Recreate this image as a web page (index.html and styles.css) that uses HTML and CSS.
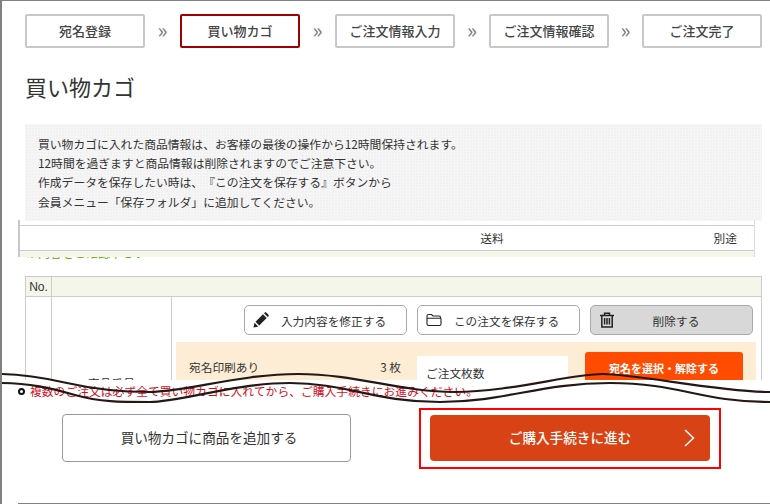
FILE: index.html
```html
<!DOCTYPE html>
<html lang="ja">
<head>
    <meta charset="UTF-8">
    <title>買い物カゴ</title>
    <link rel="stylesheet" href="styles.css">
</head>
<body>
<div class="page">
    <div class="upper">
        <div class="steps">
            <div class="step">宛名登録</div>
            <div class="sep">»</div>
            <div class="step current">買い物カゴ</div>
            <div class="sep">»</div>
            <div class="step">ご注文情報入力</div>
            <div class="sep">»</div>
            <div class="step">ご注文情報確認</div>
            <div class="sep">»</div>
            <div class="step">ご注文完了</div>
        </div>

        <h1 class="title">買い物カゴ</h1>

        <div class="notice">
            買い物カゴに入れた商品情報は、お客様の最後の操作から12時間保持されます。<br>
            12時間を過ぎますと商品情報は削除されますのでご注意下さい。<br>
            作成データを保存したい時は、『この注文を保存する』ボタンから<br>
            会員メニュー「保存フォルダ」に追加してください。
        </div>

        <div class="shipping">
            <div class="shipping-row">
                <span>送料</span>
                <span>別途</span>
            </div>
            <div class="shipping-foot"></div>
        </div>
        <div class="green-cut"><span>※内容をご確認下さい</span></div>

        <div class="cart">
            <div class="cart-no">No.</div>
            <div class="cart-head"></div>
            <div class="cart-num"></div>
            <div class="cart-name">商品番号</div>
            <div class="cart-main">
                <div class="actions">
                    <a class="btn">
                        <svg class="ico" viewBox="0 0 16 16"><path d="M.5 15.500l1-4.700 3.700 3.700zM2.500 9.800L10 2.300l3.700 3.700-7.500 7.500zM11 1.300l.8-.8c.4-.4 1-.4 1.400 0l2.300 2.300c.4.4.4 1 0 1.400l-.8.8z" fill="#222"/></svg>
                        <span>入力内容を修正する</span>
                    </a>
                    <a class="btn">
                        <svg class="ico" viewBox="0 0 16 16"><path d="M1 12V4c0-1 .6-1.500 1.500-1.500h3l1.500 1.500h6c1 0 1.500.5 1.500 1.500v.7H1M1 12c0 1 .6 1.500 1.500 1.500h11c1 0 1.500-.5 1.500-1.500V6.200" fill="none" stroke="#222" stroke-width="1.100"/></svg>
                        <span>この注文を保存する</span>
                    </a>
                    <a class="btn gray">
                        <svg class="ico" viewBox="0 0 16 16"><path d="M1 3.500h14M5.500 3.500V1.200h5v2.300M2.800 3.500V15h10.400V3.500M5.600 6v6.500M8 6v6.500M10.400 6v6.500" fill="none" stroke="#222" stroke-width="1.500"/></svg>
                        <span>削除する</span>
                    </a>
                </div>
                <div class="order">
                    <div class="order-print"><span>宛名印刷あり</span><span>3 枚</span></div>
                    <div class="order-count">ご注文枚数</div>
                    <a class="order-btn">宛名を選択・解除する</a>
                </div>
            </div>
        </div>
    </div>

    <div class="lower">
        <p class="warn"><i class="ring"></i>複数のご注文は必ず全て買い物カゴに入れてから、ご購入手続きにお進みください。</p>
        <div class="bottom-btns">
            <a class="add-btn">買い物カゴに商品を追加する</a>
            <div class="highlight">
                <a class="buy-btn">ご購入手続きに進む
                    <svg class="chevron" viewBox="0 0 11 18"><path d="M1 1l8.500 8L1 17" fill="none" stroke="#fff" stroke-width="1.500"/></svg>
                </a>
            </div>
        </div>
    </div>
    <div class="bottom-line"></div>

    <svg class="wave" viewBox="0 365 770 45">
        <path d="M0 374C25 374 45 378 67 383S115 392 150 392S240 374 298 374S400 392 455 392S570 374 603 374S720 392 770 392"/>
        <path d="M0 383C30 383 50 388 75 395S120 402 150 402S235 383 290 383S375 402 440 402S540 383 610 383S700 402 770 402"/>
    </svg>
</div>
</body>
</html>
```

FILE: styles.css
```css
* { box-sizing: border-box; }
html, body { margin: 0; padding: 0; }
body {
    font-family: "Noto Sans CJK JP", sans-serif;
    color: #333;
    background: #fff;
    overflow: hidden;
    text-spacing-trim: space-all;
}
.page {
    position: relative;
    display: flex;
    flex-direction: column;
    width: 770px;
    height: 504px;
    border-top: 1px solid #808080;
    border-left: 2px solid #808080;
    overflow: hidden;
}
.upper {
    height: 379px;
    flex: none;
    padding-top: 13px;
    overflow: hidden;
}

/* steps */
.steps {
    display: flex;
    width: 737px;
    margin-left: 23px;
}
.step {
    width: 120px;
    height: 34px;
    flex: none;
    border: 2px solid #c8c8c8;
    border-radius: 2px;
    font-size: 13px;
    font-weight: 500;
    line-height: 30px;
    text-align: center;
    color: #444;
}
.step.current { border-color: #a00000; }
.sep {
    flex: 0 0 35px;
    font-size: 21px;
    line-height: 30px;
    text-align: center;
    color: #777;
}
.sep:nth-child(6) { flex-basis: 34px; }
.sep:nth-child(8) { flex-basis: 33px; }

.title {
    margin: 23px 0 0 23px;
    font-size: 22px;
    font-weight: 400;
    line-height: 30px;
    color: #333;
}

.notice {
    width: 737px;
    height: 97px;
    margin: 23px 0 0 23px;
    padding: 10px 13px;
    font-size: 11.8px;
    line-height: 19.2px;
    background-color: #f1f1f1;
    background-image: linear-gradient(#f6f6f6 1px, transparent 1px), linear-gradient(90deg, #f6f6f6 1px, transparent 1px);
    background-size: 3px 3px;
}

/* cut off shipping table */
.shipping {
    position: relative;
    width: 737px;
    height: 37px;
    margin: -1px 0 0 16px;
    padding-top: 5px;
    border-left: 2px solid #c8c8c8;
    border-right: 1px solid #ddd;
}
.shipping-row {
    display: flex;
    justify-content: flex-end;
    gap: 210px;
    height: 26px;
    padding-right: 17px;
    border-top: 1px solid #ccc;
    border-bottom: 1px solid #ccc;
    font-size: 11.7px;
    line-height: 24px;
}
.shipping-foot { height: 6px; background: #f5f6ea; }
.green-cut {
    height: 4px;
    margin-left: 24px;
    overflow: hidden;
    font-size: 12px;
    line-height: 16px;
    color: #6fa80a;
}
.green-cut span { display: block; margin-top: -12px; }

/* cart table */
.cart {
    display: grid;
    grid-template-columns: 26px 120px 1fr;
    grid-template-rows: 20px 120px;
    width: 737px;
    margin: 15px 0 0 23px;
    border-top: 1px solid #ccc;
    border-left: 1px solid #ccc;
    border-right: 1px solid #ccc;
}
.cart-no {
    grid-column: 1;
    font-size: 12px;
    line-height: 20px;
    text-align: center;
    background: #f5f6ea;
    border-right: 1px solid #ccc;
    border-bottom: 1px solid #ccc;
    font-family: "Liberation Sans", sans-serif;
}
.cart-head {
    grid-column: 2 / 4;
    background: #f5f6ea;
    border-bottom: 1px solid #ccc;
}
.cart-num { border-right: 1px solid #ccc; }
.cart-name {
    padding-top: 77px;
    border-right: 1px solid #ccc;
    font-size: 11.7px;
    line-height: 18px;
    text-align: center;
}
.cart-main { padding: 8px 5px 0 4px; }
.actions {
    display: flex;
    gap: 10px;
    margin-left: 68px;
}
.btn {
    display: flex;
    align-items: center;
    width: 163px;
    height: 30px;
    padding-left: 8px;
    border: 1px solid #aaa;
    border-radius: 5px;
    font-size: 11.7px;
    color: #333;
}
.btn span { flex: 1; padding-right: 8px; text-align: center; }
.btn.gray { background: #d8d8d8; }
.btn.gray span { padding-right: 15px; }
.ico { width: 16px; height: 16px; flex: none; }
.order {
    display: flex;
    align-items: flex-start;
    height: 60px;
    margin-top: 7px;
    padding-left: 13px;
    background: #fdedd5;
    font-size: 11.7px;
}
.order-print {
    display: flex;
    justify-content: space-between;
    width: 212px;
    margin-top: 16px;
    line-height: 18px;
}
.order-count {
    width: 151px;
    height: 40px;
    margin: 14px 0 0 16px;
    padding: 8px 9px;
    line-height: 18px;
    background: #fff;
}
.order-btn {
    width: 158px;
    height: 32px;
    margin: 10px 0 0 17px;
    border-radius: 3px;
    background: #ff4c00;
    color: #fff;
    font-size: 11px;
    font-weight: 700;
    line-height: 32px;
    text-align: center;
}

/* below the cut */
.warn {
    display: flex;
    align-items: center;
    gap: 5px;
    margin: 2px 0 0 16px;
    font-size: 11.8px;
    line-height: 18px;
    color: #d2101e;
}
.ring {
    width: 7px;
    height: 7px;
    border: 2px solid #111;
    border-radius: 50%;
}
.bottom-btns {
    display: flex;
    align-items: flex-start;
    margin-top: 8px;
}
.add-btn {
    width: 289px;
    height: 48px;
    margin: 6px 0 0 60px;
    padding-left: 5px;
    border: 1px solid #999;
    border-radius: 4px;
    font-size: 13.6px;
    line-height: 44px;
    text-align: center;
}
.highlight {
    width: 302px;
    height: 61px;
    margin-left: 68px;
    padding: 5px 9px;
    border: 2px solid #f00;
}
.buy-btn {
    position: relative;
    display: block;
    height: 46px;
    border-radius: 4px;
    background: #d84315;
    color: #fff;
    font-size: 13.6px;
    font-weight: 500;
    line-height: 44px;
    text-align: center;
}
.chevron {
    position: absolute;
    top: 14px;
    right: 15px;
    width: 11px;
    height: 18px;
}
.bottom-line {
    height: 1px;
    margin: auto 0 0 16px;
    background: #808080;
}

/* torn paper lines over the page */
.wave {
    position: absolute;
    top: 364px;
    left: -2px;
    width: 770px;
    height: 45px;
    pointer-events: none;
}
.wave path {
    fill: none;
    stroke: #231815;
    stroke-width: 2.2;
}
```
